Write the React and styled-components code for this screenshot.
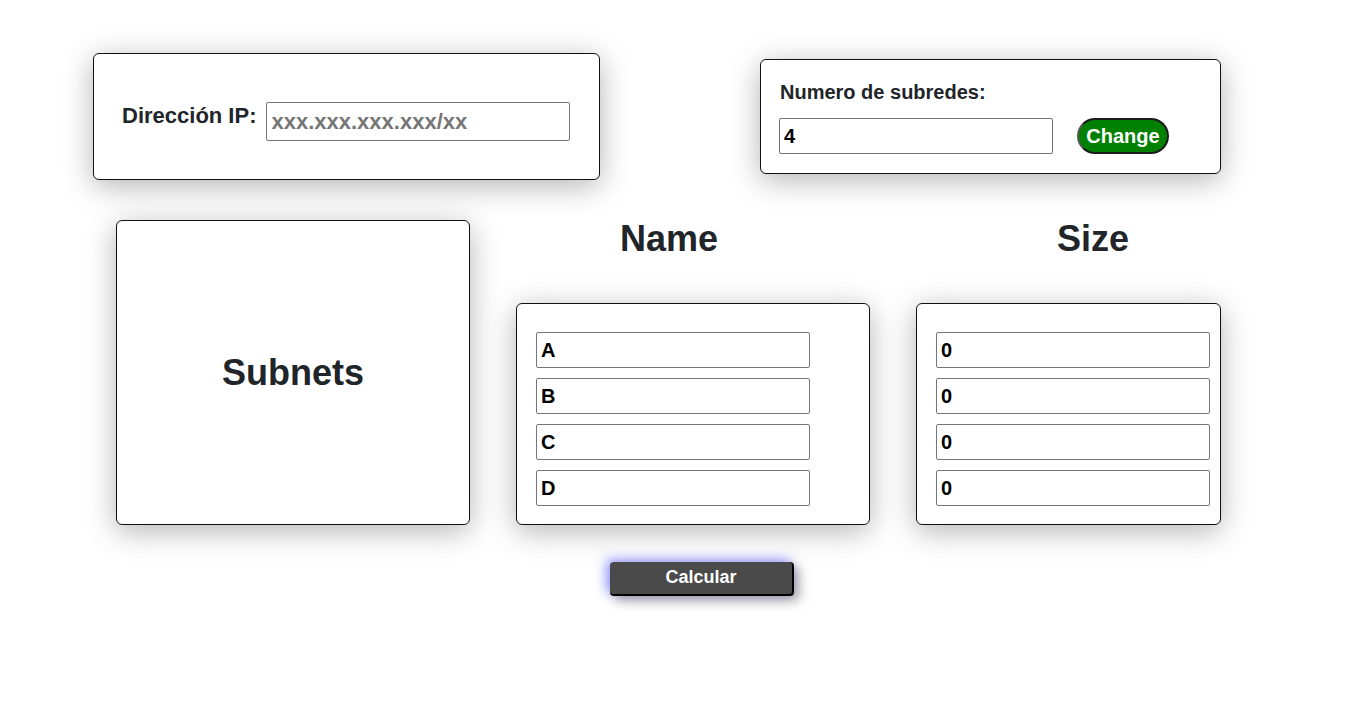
import React from 'react';
import styled, { createGlobalStyle } from 'styled-components';

const GlobalStyle = createGlobalStyle`
  body {
    margin: 0;
    background: #fff;
    font-family: "Liberation Sans", Arial, sans-serif;
    color: #212529;
  }
`;

const Page = styled.div`
  padding: 53px 0 60px 93px;
`;

const TopRow = styled.div`
  display: flex;
  align-items: center;
  gap: 160px;
`;

const Card = styled.div`
  box-sizing: border-box;
  background: #fff;
  border: 1px solid #111;
  border-radius: 6px;
  box-shadow: 0 6px 30px rgba(0, 0, 0, 0.3);
`;

const IpCard = styled(Card)`
  width: 507px;
  height: 127px;
  padding: 48px 28px 0;
  display: flex;
  align-items: flex-start;
  gap: 10px;
`;

const IpLabel = styled.label`
  font-size: 22px;
  font-weight: bold;
  line-height: 25px;
  margin-top: 1px;
`;

const TextInput = styled.input`
  box-sizing: border-box;
  width: ${(p) => p.$w || 274}px;
  height: ${(p) => p.$h || 36}px;
  border: 1px solid #767676;
  border-radius: 2px;
  padding: 0 4px;
  font-family: "Liberation Sans", Arial, sans-serif;
  font-size: ${(p) => p.$fs || 20}px;
  font-weight: bold;
  color: #000;
  background: #fff;
  outline: none;

  &::placeholder {
    color: #767676;
  }
`;

const SubCard = styled(Card)`
  width: 461px;
  height: 115px;
  padding: 21px 19px 0 18px;
`;

const SubLabel = styled.div`
  font-size: 20px;
  font-weight: bold;
  line-height: 23px;
  margin: 0 0 14px 1px;
`;

const InlineRow = styled.div`
  display: flex;
  align-items: center;
  gap: 24px;
`;

const ChangeButton = styled.button`
  box-sizing: border-box;
  width: 92px;
  height: 36px;
  background: #008000;
  color: #fff;
  border: 2px solid #1b1b1b;
  border-left-color: #555;
  border-radius: 18px;
  font-family: "Liberation Sans", Arial, sans-serif;
  font-size: 20px;
  font-weight: bold;
  padding: 0;
`;

const MainRow = styled.div`
  display: flex;
  align-items: flex-end;
  gap: 46px;
  margin: 38px 0 0 23px;
`;

const SubnetsCard = styled(Card)`
  width: 354px;
  height: 305px;
  display: flex;
  align-items: center;
  justify-content: center;
  font-size: 36px;
  font-weight: bold;
`;

const Column = styled.div`
  display: flex;
  flex-direction: column;
  width: ${(p) => p.$w}px;
`;

const Heading = styled.h2`
  margin: 0 0 44px;
  font-size: 36px;
  line-height: 41px;
  font-weight: bold;
  text-align: center;
  padding-left: ${(p) => p.$pl || 0}px;
  padding-right: ${(p) => p.$pr || 0}px;
`;

const ListCard = styled(Card)`
  height: 222px;
  padding: 28px 0 0 19px;
  display: flex;
  flex-direction: column;
  gap: 10px;
`;

const Footer = styled.div`
  margin: 37px 0 0 517px;
`;

const CalcButton = styled.button`
  box-sizing: border-box;
  width: 184px;
  height: 34px;
  padding: 0 0 1px;
  background: #4a4a4a;
  color: #fff;
  border: none;
  border-right: 2px solid #000;
  border-bottom: 2px solid #000;
  border-radius: 4px;
  font-family: "Liberation Sans", Arial, sans-serif;
  font-size: 18px;
  font-weight: bold;
  box-shadow: -4px -3px 12px rgba(90, 90, 255, 0.6), 5px 5px 12px rgba(0, 0, 0, 0.35);
`;

const names = ['A', 'B', 'C', 'D'];
const sizes = ['0', '0', '0', '0'];

export default function App() {
  return (
    <>
      <GlobalStyle />
      <Page>
        <TopRow>
          <IpCard>
            <IpLabel>Dirección IP:</IpLabel>
            <TextInput $w={304} $h={39} $fs={22} placeholder="xxx.xxx.xxx.xxx/xx" />
          </IpCard>
          <SubCard>
            <SubLabel>Numero de subredes:</SubLabel>
            <InlineRow>
              <TextInput defaultValue="4" />
              <ChangeButton>Change</ChangeButton>
            </InlineRow>
          </SubCard>
        </TopRow>
        <MainRow>
          <SubnetsCard>Subnets</SubnetsCard>
          <Column $w={354}>
            <Heading $pr={48}>Name</Heading>
            <ListCard>
              {names.map((n) => (
                <TextInput key={n} defaultValue={n} />
              ))}
            </ListCard>
          </Column>
          <Column $w={305}>
            <Heading $pl={49}>Size</Heading>
            <ListCard>
              {sizes.map((s, i) => (
                <TextInput key={i} defaultValue={s} />
              ))}
            </ListCard>
          </Column>
        </MainRow>
        <Footer>
          <CalcButton>Calcular</CalcButton>
        </Footer>
      </Page>
    </>
  );
}
